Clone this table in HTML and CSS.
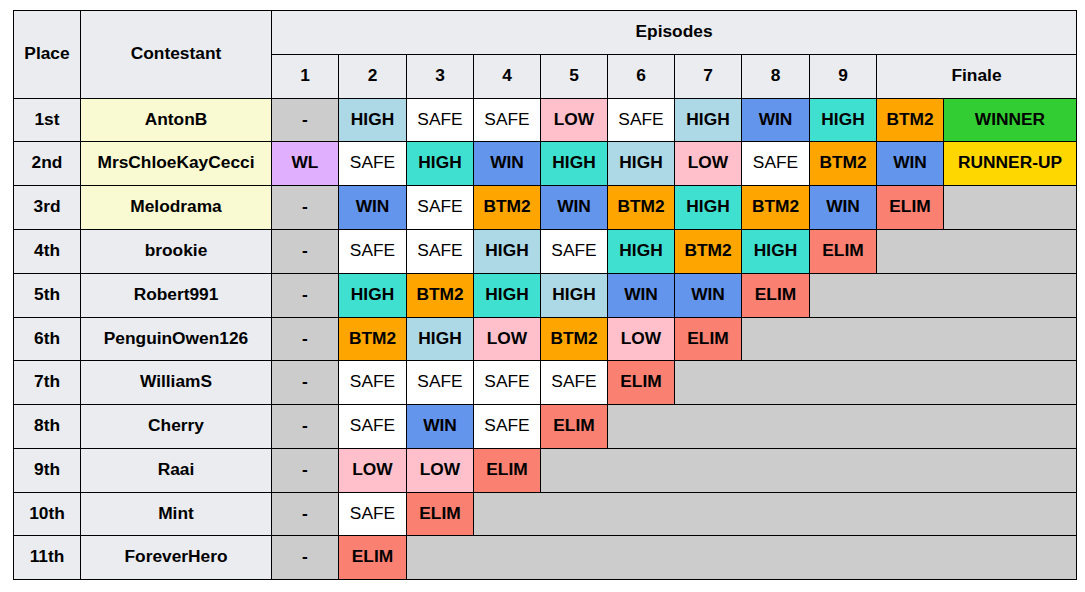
FILE: index.html
```html
<!DOCTYPE html>
<html>
<head>
<meta charset="utf-8">
<link rel="stylesheet" href="styles.css">
</head>
<body>
<table class="results">
<colgroup>
<col class="c-place"><col class="c-name">
<col class="c-ep"><col class="c-ep8"><col class="c-ep"><col class="c-ep"><col class="c-ep"><col class="c-ep"><col class="c-ep"><col class="c-ep8"><col class="c-ep"><col class="c-ep"><col class="c-fin">
</colgroup>
<tr class="h44">
<th rowspan="2">Place</th><th rowspan="2">Contestant</th><th colspan="11">Episodes</th>
</tr>
<tr class="h44">
<th>1</th><th>2</th><th>3</th><th>4</th><th>5</th><th>6</th><th>7</th><th>8</th><th>9</th><th colspan="2">Finale</th>
</tr>
<tr class="h43">
<th>1st</th><td class="top">AntonB</td>
<td class="na">-</td><td class="high">HIGH</td><td class="safe">SAFE</td><td class="safe">SAFE</td><td class="low">LOW</td><td class="safe">SAFE</td><td class="high">HIGH</td><td class="win">WIN</td><td class="high2">HIGH</td><td class="btm">BTM2</td><td class="winner">WINNER</td>
</tr>
<tr class="h44">
<th>2nd</th><td class="top">MrsChloeKayCecci</td>
<td class="wl">WL</td><td class="safe">SAFE</td><td class="high2">HIGH</td><td class="win">WIN</td><td class="high2">HIGH</td><td class="high">HIGH</td><td class="low">LOW</td><td class="safe">SAFE</td><td class="btm">BTM2</td><td class="win">WIN</td><td class="runner">RUNNER-UP</td>
</tr>
<tr class="h44">
<th>3rd</th><td class="top">Melodrama</td>
<td class="na">-</td><td class="win">WIN</td><td class="safe">SAFE</td><td class="btm">BTM2</td><td class="win">WIN</td><td class="btm">BTM2</td><td class="high2">HIGH</td><td class="btm">BTM2</td><td class="win">WIN</td><td class="elim">ELIM</td><td class="na"></td>
</tr>
<tr class="h44">
<th>4th</th><td class="plain">brookie</td>
<td class="na">-</td><td class="safe">SAFE</td><td class="safe">SAFE</td><td class="high">HIGH</td><td class="safe">SAFE</td><td class="high2">HIGH</td><td class="btm">BTM2</td><td class="high2">HIGH</td><td class="elim">ELIM</td><td class="na" colspan="2"></td>
</tr>
<tr class="h44">
<th>5th</th><td class="plain">Robert991</td>
<td class="na">-</td><td class="high2">HIGH</td><td class="btm">BTM2</td><td class="high2">HIGH</td><td class="high">HIGH</td><td class="win">WIN</td><td class="win">WIN</td><td class="elim">ELIM</td><td class="na" colspan="3"></td>
</tr>
<tr class="h43">
<th>6th</th><td class="plain">PenguinOwen126</td>
<td class="na">-</td><td class="btm">BTM2</td><td class="high">HIGH</td><td class="low">LOW</td><td class="btm">BTM2</td><td class="low">LOW</td><td class="elim">ELIM</td><td class="na" colspan="4"></td>
</tr>
<tr class="h44">
<th>7th</th><td class="plain">WilliamS</td>
<td class="na">-</td><td class="safe">SAFE</td><td class="safe">SAFE</td><td class="safe">SAFE</td><td class="safe">SAFE</td><td class="elim">ELIM</td><td class="na" colspan="5"></td>
</tr>
<tr class="h44">
<th>8th</th><td class="plain">Cherry</td>
<td class="na">-</td><td class="safe">SAFE</td><td class="win">WIN</td><td class="safe">SAFE</td><td class="elim">ELIM</td><td class="na" colspan="6"></td>
</tr>
<tr class="h44">
<th>9th</th><td class="plain">Raai</td>
<td class="na">-</td><td class="low">LOW</td><td class="low">LOW</td><td class="elim">ELIM</td><td class="na" colspan="7"></td>
</tr>
<tr class="h43">
<th>10th</th><td class="plain">Mint</td>
<td class="na">-</td><td class="safe">SAFE</td><td class="elim">ELIM</td><td class="na" colspan="8"></td>
</tr>
<tr class="h44">
<th>11th</th><td class="plain">ForeverHero</td>
<td class="na">-</td><td class="elim">ELIM</td><td class="na" colspan="9"></td>
</tr>
</table>
</body>
</html>
```
FILE: styles.css
```css
html, body {
  margin: 0;
  padding: 0;
  background: #ffffff;
}
body {
  padding: 10px 0 0 13px;
  font-family: "Liberation Sans", Arial, sans-serif;
  font-size: 17.33px;
  color: #000000;
}
.results {
  border-collapse: collapse;
  table-layout: fixed;
  width: 1064px;
  background: #ffffff;
}
.c-place { width: 67px; }
.c-name { width: 191px; }
.c-ep { width: 67px; }
.c-ep8 { width: 68px; }
.c-fin { width: 133px; }
.results th, .results td {
  border: 1px solid #000000;
  padding: 0 0 3px 0;
  text-align: center;
  vertical-align: middle;
  font-weight: bold;
  line-height: 20px;
  white-space: nowrap;
}
.results th { background: #eaecf0; }
.h44 { height: 44px; }
.h43 { height: 43px; }
.top { background: #fafad2; }
.plain { background: #eaecf0; }
.na { background: #cccccc; }
.safe { background: #ffffff; font-weight: normal !important; }
.high { background: #add8e6; }
.high2 { background: #40e0d0; }
.low { background: #ffc0cb; }
.win { background: #6495ed; }
.btm { background: #ffa500; }
.elim { background: #fa8072; }
.wl { background: #e0b0ff; }
.winner { background: #32cd32; }
.runner { background: #ffd700; }
```
